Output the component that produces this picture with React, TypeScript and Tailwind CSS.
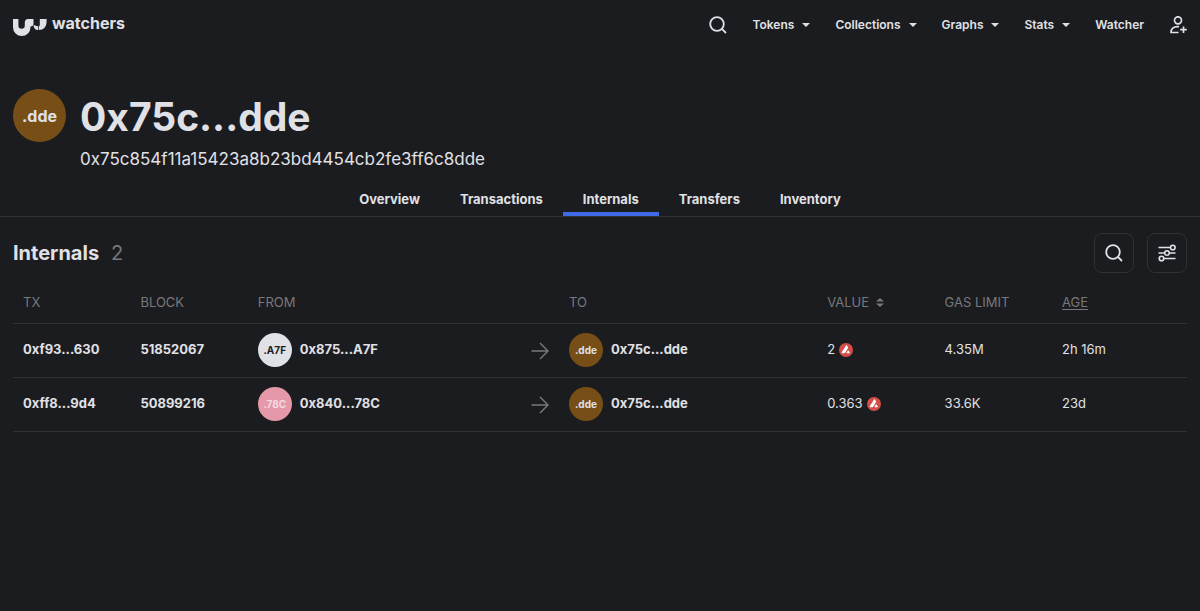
import React from 'react';

interface AvatarProps {
  label: string;
  className: string;
}

interface Internal {
  tx: string;
  block: string;
  from: string;
  fromTag: string;
  fromColor: string;
  to: string;
  toTag: string;
  value: string;
  gas: string;
  age: string;
}

const navItems = [
  { label: 'Tokens', menu: true },
  { label: 'Collections', menu: true },
  { label: 'Graphs', menu: true },
  { label: 'Stats', menu: true },
  { label: 'Watcher', menu: false },
];

const tabs = ['Overview', 'Transactions', 'Internals', 'Transfers', 'Inventory'];

const internals: Internal[] = [
  {
    tx: '0xf93...630',
    block: '51852067',
    from: '0x875...A7F',
    fromTag: '.A7F',
    fromColor: 'bg-[#e0e1e6] text-[#1b1c1f]',
    to: '0x75c...dde',
    toTag: '.dde',
    value: '2',
    gas: '4.35M',
    age: '2h 16m',
  },
  {
    tx: '0xff8...9d4',
    block: '50899216',
    from: '0x840...78C',
    fromTag: '.78C',
    fromColor: 'bg-[#e698ab] text-[#f3dbe2]',
    to: '0x75c...dde',
    toTag: '.dde',
    value: '0.363',
    gas: '33.6K',
    age: '23d',
  },
];

const Logo: React.FC = () => (
  <svg width="34" height="18" viewBox="0 0 34 18" fill="currentColor" aria-hidden="true">
    <path d="M0 0H5.4V6.500a3.200 3.200 0 0 0 6.400 0V4C11.800 1.500 13 0 15 0H20.500V4.600a3 3 0 0 1-3 3V8.300a8.750 8.750 0 0 1-17.500 0Z" />
    <path d="M20.500 6c2 0 2.400 1.300 4.500 1.300V11c-2.600 0-4.500-2-4.500-5Z" />
    <path d="M26.800 0H33.600V2.500c0 5-3 8.500-7.900 8.500V7.200c.8 0 1.100-.6 1.100-1.500Z" />
  </svg>
);

const SearchIcon: React.FC = () => (
  <svg width="18" height="18" viewBox="0 0 18 18" fill="none" stroke="currentColor" strokeWidth="1.800" aria-hidden="true">
    <circle cx="8" cy="8" r="6.800" />
    <path d="M12.900 12.900 17 17" />
  </svg>
);

const FilterIcon: React.FC = () => (
  <svg width="18" height="18" viewBox="0 0 18 18" fill="none" stroke="currentColor" strokeWidth="1.600" aria-hidden="true">
    <path d="M.5 3.500H12.500M.5 9H6.500M11.500 9H17.500M6 14.500H17.500" />
    <circle cx="14.800" cy="3.500" r="2.300" />
    <circle cx="9" cy="9" r="2.300" />
    <circle cx="3.500" cy="14.500" r="2.300" />
  </svg>
);

const UserPlusIcon: React.FC = () => (
  <svg width="18" height="18" viewBox="0 0 18 18" fill="none" stroke="currentColor" strokeWidth="1.700" aria-hidden="true">
    <circle cx="9" cy="4.300" r="3.500" />
    <path d="M9.500 16.500H2c0-3.800 2.500-5.800 6.500-5.800h1.500M14.500 10.500v6.500M11.200 13.700h6.600" />
  </svg>
);

const ArrowIcon: React.FC = () => (
  <svg className="inline-block align-middle" width="18" height="18" viewBox="0 0 18 18" fill="none" stroke="currentColor" strokeWidth="1.500" aria-hidden="true">
    <path d="M.5 9H17M9 1l8 8-8 8" />
  </svg>
);

const AvaxIcon: React.FC = () => (
  <svg width="14" height="14" viewBox="0 0 14 14" aria-hidden="true">
    <circle cx="7" cy="7" r="7" fill="#d54d4b" />
    <path d="M6.900 2.800c.4-.6.900-.6 1.200 0l.7 1.300c.3.500.3.800 0 1.300L6.300 9.600c-.3.500-.5.600-1 .6H3.400c-.7 0-.9-.4-.6-1ZM8.600 7.900c.3-.6.900-.6 1.200 0l.8 1.300c.3.600.1 1-.5 1H8.300c-.7 0-.9-.4-.6-1Z" fill="#fff" />
  </svg>
);

const Caret: React.FC = () => (
  <svg width="8" height="4" viewBox="0 0 8 4" fill="currentColor" aria-hidden="true">
    <path d="M0 0h8L4 4Z" />
  </svg>
);

const Avatar: React.FC<AvatarProps> = ({ label, className }) => (
  <span className={`flex shrink-0 items-center justify-center rounded-full font-bold ${className}`}>
    {label}
  </span>
);

const Header: React.FC = () => (
  <header className="flex h-[50px] items-center justify-between px-[13px]">
    <a href="#home" className="flex items-start gap-[5px]">
      <span className="pt-1.5">
        <Logo />
      </span>
      <span className="text-base leading-5 font-bold">watchers</span>
    </a>
    <nav className="flex items-center gap-[25px] text-xs font-semibold">
      <button type="button" aria-label="Search" className="cursor-pointer">
        <SearchIcon />
      </button>
      {navItems.map((item) =>
        item.menu ? (
          <button key={item.label} type="button" className="flex cursor-pointer items-center gap-2">
            {item.label}
            <Caret />
          </button>
        ) : (
          <a key={item.label} href="#watcher">
            {item.label}
          </a>
        )
      )}
      <button type="button" aria-label="Sign up" className="cursor-pointer">
        <UserPlusIcon />
      </button>
    </nav>
  </header>
);

const Profile: React.FC = () => (
  <section className="flex gap-[14px] px-[13px] pt-[39px]">
    <Avatar label=".dde" className="size-[53px] bg-[#784e17] text-base" />
    <div>
      <h1 className="pt-1 text-[39px] leading-[48px] font-bold">0x75c...dde</h1>
      <p className="pt-1 text-[17px] leading-7">0x75c854f11a15423a8b23bd4454cb2fe3ff6c8dde</p>
    </div>
  </section>
);

const Tabs: React.FC = () => (
  <nav className="mt-2 flex justify-center border-b border-[#303134]">
    {tabs.map((tab) => (
      <a
        key={tab}
        href={`#${tab.toLowerCase()}`}
        className={`border-b-4 px-5 pt-2 pb-[3px] text-[13px] leading-5 font-bold ${
          tab === 'Internals' ? 'border-[#3e6ae8]' : 'border-transparent'
        }`}
      >
        {tab}
      </a>
    ))}
  </nav>
);

const InternalsTable: React.FC = () => (
  <table className="w-full table-fixed text-left text-[13px]">
    <colgroup>
      <col className="w-[10%]" />
      <col className="w-[10%]" />
      <col className="w-[22%]" />
      <col />
      <col className="w-[22%]" />
      <col className="w-[10%]" />
      <col className="w-[10%]" />
      <col className="w-[135px]" />
    </colgroup>
    <thead className="text-[#77787b]">
      <tr className="h-10 border-b border-[#303134]">
        <th className="px-[10px] font-normal">TX</th>
        <th className="px-[10px] font-normal">BLOCK</th>
        <th className="px-[10px] font-normal">FROM</th>
        <td />
        <th className="px-[10px] font-normal">TO</th>
        <th className="px-[10px] font-normal">
          <button type="button" className="flex cursor-pointer items-center gap-[7px]">
            VALUE
            <svg width="8" height="9" viewBox="0 0 8 9" fill="currentColor" aria-hidden="true">
              <path d="M4 0l4 3.500H0ZM0 5.500h8L4 9Z" />
            </svg>
          </button>
        </th>
        <th className="px-[10px] font-normal">GAS LIMIT</th>
        <th className="px-[10px] font-normal">
          <button type="button" className="cursor-pointer underline underline-offset-2">AGE</button>
        </th>
      </tr>
    </thead>
    <tbody>
      {internals.map((row) => (
        <tr key={row.tx} className="h-[54px] border-b border-[#303134]">
          <td className="px-[10px] font-bold">
            <a href="#tx">{row.tx}</a>
          </td>
          <td className="px-[10px] font-bold">
            <a href="#block">{row.block}</a>
          </td>
          <td className="px-[10px] font-bold">
            <a href="#from" className="flex items-center gap-2">
              <Avatar label={row.fromTag} className={`size-[34px] text-[10px] ${row.fromColor}`} />
              {row.from}
            </a>
          </td>
          <td className="pr-[10px] text-right text-[#77787b]">
            <ArrowIcon />
          </td>
          <td className="px-[10px] font-bold">
            <a href="#to" className="flex items-center gap-2">
              <Avatar label={row.toTag} className="size-[34px] bg-[#784e17] text-[10px]" />
              {row.to}
            </a>
          </td>
          <td className="px-[10px]">
            <span className="flex items-center gap-1">
              {row.value}
              <AvaxIcon />
            </span>
          </td>
          <td className="px-[10px]">{row.gas}</td>
          <td className="px-[10px]">{row.age}</td>
        </tr>
      ))}
    </tbody>
  </table>
);

export default function App() {
  return (
    <div className="min-h-screen bg-[#1b1c1f] font-['Inter',sans-serif] text-[#e0e1e6]">
      <Header />
      <Profile />
      <Tabs />
      <main className="px-[13px] pt-4">
        <div className="mb-[10px] flex items-center justify-between">
          <h2 className="flex gap-3 text-xl font-bold">
            Internals
            <span className="font-normal text-[#77787b]">2</span>
          </h2>
          <div className="flex gap-[13px]">
            <button
              type="button"
              aria-label="Search internals"
              className="flex size-10 cursor-pointer items-center justify-center rounded-lg border border-[#303134]"
            >
              <SearchIcon />
            </button>
            <button
              type="button"
              aria-label="Filter internals"
              className="flex size-10 cursor-pointer items-center justify-center rounded-lg border border-[#303134]"
            >
              <FilterIcon />
            </button>
          </div>
        </div>
        <InternalsTable />
      </main>
    </div>
  );
}
